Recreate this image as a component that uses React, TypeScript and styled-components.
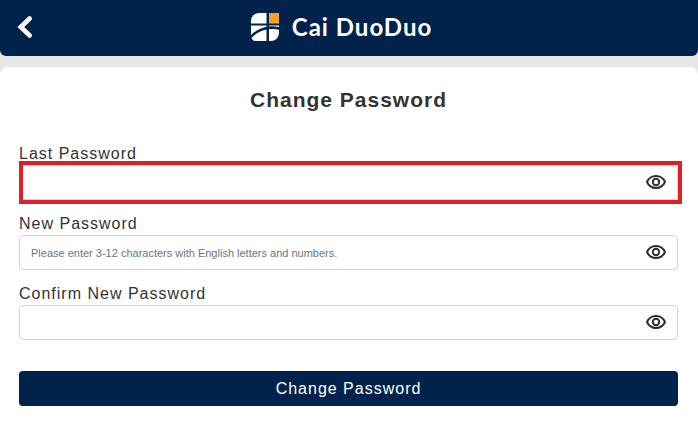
import React, { useState } from "react";
import styled, { createGlobalStyle, css } from "styled-components";

const GlobalStyle = createGlobalStyle`
  *, *::before, *::after { box-sizing: border-box; }
  body {
    margin: 0;
    background: #fff;
    color: #333;
    font-family: "Liberation Sans", Arial, sans-serif;
  }
`;

const Page = styled.div`
  background: #e6e6e6;
`;

const Header = styled.header`
  display: grid;
  grid-template-columns: 1fr auto 1fr;
  align-items: center;
  height: 56px;
  padding: 0 32px 2px 16px;
  background: #00224b;
  border-radius: 0 0 6px 6px;
`;

const BackButton = styled.button`
  display: flex;
  justify-self: start;
  padding: 0;
  border: 0;
  background: none;
  color: #fff;
  cursor: pointer;
`;

const Brand = styled.div`
  display: flex;
  align-items: center;
  gap: 12px;
  color: #fff;
  font: 700 24px/28px Lato, sans-serif;
  letter-spacing: 1px;
`;

const Card = styled.main`
  margin-top: 11px;
  min-height: calc(100vh - 67px);
  padding: 20px 20px 16px 19px;
  background: #fff;
  border-radius: 8px 8px 0 0;
`;

const Title = styled.h1`
  margin: 0 0 31px;
  text-align: center;
  font-size: 21px;
  line-height: 26px;
  letter-spacing: 1px;
`;

const Field = styled.div`
  margin-bottom: 14px;
`;

const Label = styled.label`
  display: block;
  font-size: 16px;
  line-height: 20px;
  letter-spacing: 1px;
  padding-bottom: 1px;
`;

const InputBox = styled.div<{ $highlighted?: boolean }>`
  position: relative;
  display: flex;
  align-items: center;
  height: 35px;
  padding-right: 10px;
  border: 1px solid #d3d5d8;
  border-radius: 4px;
  background: #fff;

  ${({ $highlighted }) =>
    $highlighted &&
    css`
      &::after {
        content: "";
        position: absolute;
        inset: -5px -5px -5px -1px;
        border: 4px solid #e01f27;
        pointer-events: none;
      }
    `}
`;

const Input = styled.input`
  flex: 1;
  min-width: 0;
  height: 100%;
  padding: 0 11px;
  border: 0;
  outline: 0;
  background: transparent;
  color: #333;
  font: 11px "Liberation Sans", Arial, sans-serif;

  &::placeholder {
    color: #6c757d;
    opacity: 1;
  }
`;

const EyeButton = styled.button`
  display: flex;
  padding: 0 0 2px;
  border: 0;
  background: none;
  color: #2d2d2d;
  cursor: pointer;
`;

const SubmitButton = styled.button`
  display: block;
  width: 100%;
  height: 35px;
  margin-top: 31px;
  padding: 0;
  border: 0;
  border-radius: 4px;
  background: #00224b;
  color: #fff;
  font: 16px "Liberation Sans", Arial, sans-serif;
  letter-spacing: 1px;
  cursor: pointer;
`;

const BackIcon = () => (
  <svg width="18" height="24" viewBox="0 0 18 24" fill="none" aria-hidden="true">
    <path d="M13.700 3.500 4.800 12 13.700 20.500" stroke="currentColor" strokeWidth="4.600" strokeLinecap="round" />
  </svg>
);

const LogoIcon = () => (
  <svg width="30" height="30" viewBox="0 0 30 30" aria-hidden="true">
    <path d="M9 1H16.500V11.500H1V9A8 8 0 0 1 9 1Z" fill="#fff" />
    <path d="M19 1H29V11.500H19Z" fill="#f9a02b" />
    <path d="M1 13.500H16.500V14.800C10.500 16.200 5 19 1 23Z" fill="#fff" />
    <path d="M19 13.500H29V15C25.500 14.300 22 14.200 19 14.500Z" fill="#fff" />
    <path d="M16.500 17.500V29H4.500C3.300 28.500 2 27.500 1.500 26C5.500 21.500 10.500 18.800 16.500 17.500Z" fill="#fff" />
    <path d="M19 17.200C22 16.800 25.500 17 29 17.700V21A8 8 0 0 1 21 29H19Z" fill="#fff" />
  </svg>
);

const EyeIcon = () => (
  <svg width="22" height="16" viewBox="0 0 22 16" fill="none" stroke="currentColor" strokeWidth="1.900" aria-hidden="true">
    <path d="M2 8C3.700 4.200 7 2 11 2S18.300 4.200 20 8C18.300 11.800 15 14 11 14S3.700 11.800 2 8Z" strokeLinejoin="round" />
    <circle cx="11" cy="8" r="3.200" />
  </svg>
);

interface PasswordFieldProps {
  id: string;
  label: string;
  placeholder?: string;
  highlighted?: boolean;
}

function PasswordField({ id, label, placeholder, highlighted }: PasswordFieldProps) {
  const [visible, setVisible] = useState(false);
  return (
    <Field>
      <Label htmlFor={id}>{label}</Label>
      <InputBox $highlighted={highlighted}>
        <Input id={id} type={visible ? "text" : "password"} placeholder={placeholder} />
        <EyeButton type="button" aria-label="Show password" onClick={() => setVisible(!visible)}>
          <EyeIcon />
        </EyeButton>
      </InputBox>
    </Field>
  );
}

export default function App() {
  return (
    <Page>
      <GlobalStyle />
      <Header>
        <BackButton type="button" aria-label="Back">
          <BackIcon />
        </BackButton>
        <Brand>
          <LogoIcon />
          <span>Cai DuoDuo</span>
        </Brand>
      </Header>
      <Card>
        <Title>Change Password</Title>
        <form onSubmit={(e) => e.preventDefault()}>
          <PasswordField id="last-password" label="Last Password" highlighted />
          <PasswordField
            id="new-password"
            label="New Password"
            placeholder="Please enter 3-12 characters with English letters and numbers."
          />
          <PasswordField id="confirm-password" label="Confirm New Password" />
          <SubmitButton type="submit">Change Password</SubmitButton>
        </form>
      </Card>
    </Page>
  );
}
